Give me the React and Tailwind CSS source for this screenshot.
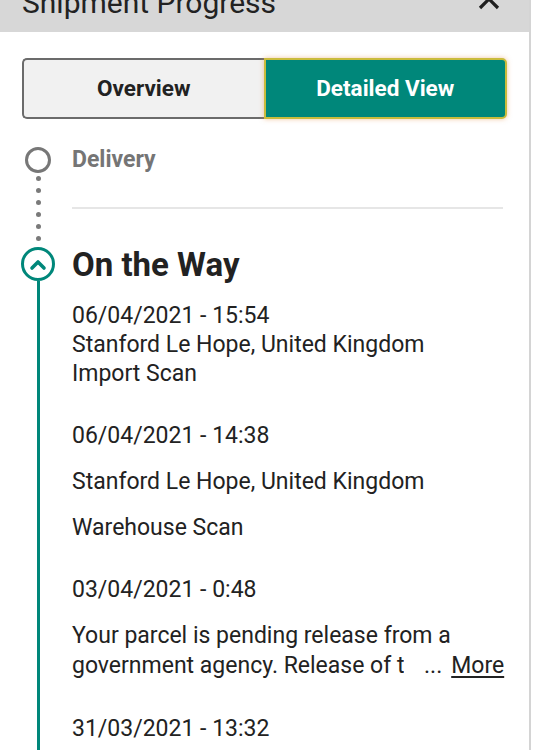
import React from 'react'

const font = { fontFamily: 'Roboto, "Liberation Sans", sans-serif' }

function Dots() {
  return (
    <div className="flex flex-col items-center gap-[7px] pt-[3px] pb-[6px]">
      {[0, 1, 2, 3, 4, 5].map(i => (
        <span key={i} className="block h-[5px] w-[5px] rounded-full bg-[#7a7a7a]"></span>
      ))}
    </div>
  )
}

export default function App() {
  return (
    <div style={font} className="min-h-[750px] w-[541px] bg-white text-[#222]">
      <div className="min-h-[750px] w-[531px] border-r-2 border-[#d4d4d4] overflow-hidden">
        {/* header */}
        <div className="relative h-[32px] overflow-hidden bg-[#d7d7d7]">
          <div className="mt-[-12px] pl-[22px] text-[30px] leading-none text-[#222]">Shipment Progress</div>
          <svg className="absolute right-[28px] top-[-13px]" width="24" height="24" viewBox="0 0 24 24">
            <path d="M3 3 L21 21 M21 3 L3 21" stroke="#1f1f1f" strokeWidth="3.2" fill="none" />
          </svg>
        </div>

        {/* toggle */}
        <div className="mx-[22px] mt-[26px] flex h-[61px] text-[22.5px] font-bold">
          <div className="flex flex-1 items-center justify-center rounded-l-[5px] border-2 border-r-0 border-[#6b6b6b] bg-[#f1f1f1] text-[#222]">
            Overview
          </div>
          <div className="flex flex-1 items-center justify-center rounded-r-[5px] border-2 border-[#c9bc3c] bg-[#00877a] text-white shadow-[0_0_5px_rgba(230,150,80,0.55)]">
            Detailed View
          </div>
        </div>

        {/* delivery step */}
        <div className="flex pt-[28px]">
          <div className="flex w-[72px] shrink-0 flex-col items-center pl-[4px]">
            <span className="block h-[26px] w-[26px] rounded-full border-[3px] border-[#777]"></span>
            <Dots />
          </div>
          <div className="flex-1 pr-[26px]">
            <div className="text-[23px] font-bold leading-[26px] text-[#757575]">Delivery</div>
            <div className="mt-[34px] h-[2px] bg-[#e6e6e6]"></div>
          </div>
        </div>

        {/* on the way step */}
        <div className="flex">
          <div className="flex w-[72px] shrink-0 flex-col items-center pl-[4px]">
            <span className="flex h-[34px] w-[34px] items-center justify-center rounded-full border-[3px] border-[#00877a] bg-white">
              <svg width="18" height="13" viewBox="0 0 18 13">
                <path d="M3 10 L9 4 L15 10" stroke="#00877a" strokeWidth="3.6" fill="none" strokeLinecap="round" strokeLinejoin="round" />
              </svg>
            </span>
            <span className="block w-[3px] flex-1 bg-[#00877a]"></span>
          </div>
          <div className="mt-[-2px] min-w-0 flex-1 pr-[26px] text-[23px]">
            <div className="text-[33px] font-bold leading-[40px] text-[#222]">On the Way</div>

            <div className="mt-[16px] leading-[29px]">
              <div>06/04/2021 - 15:54</div>
              <div>Stanford Le Hope, United Kingdom</div>
              <div>Import Scan</div>
            </div>

            <div className="mt-[33px] flex flex-col gap-[17px] leading-[29px]">
              <div>06/04/2021 - 14:38</div>
              <div>Stanford Le Hope, United Kingdom</div>
              <div>Warehouse Scan</div>
            </div>

            <div className="mt-[33px] leading-[29px]">
              <div>03/04/2021 - 0:48</div>
              <div className="mt-[17px] leading-[30px]">
                <div>Your parcel is pending release from a</div>
                <div className="flex items-baseline">
                  <span className="w-[332px] shrink-0 overflow-hidden whitespace-nowrap">government agency. Release of the shipment</span>
                  <span className="ml-[20px] shrink-0">...</span>
                  <span className="ml-[9px] shrink-0 underline underline-offset-[3px]">More</span>
                </div>
              </div>
            </div>

            <div className="mt-[33px] pb-[40px] leading-[29px]">
              <div>31/03/2021 - 13:32</div>
            </div>
          </div>
        </div>
      </div>
    </div>
  )
}
